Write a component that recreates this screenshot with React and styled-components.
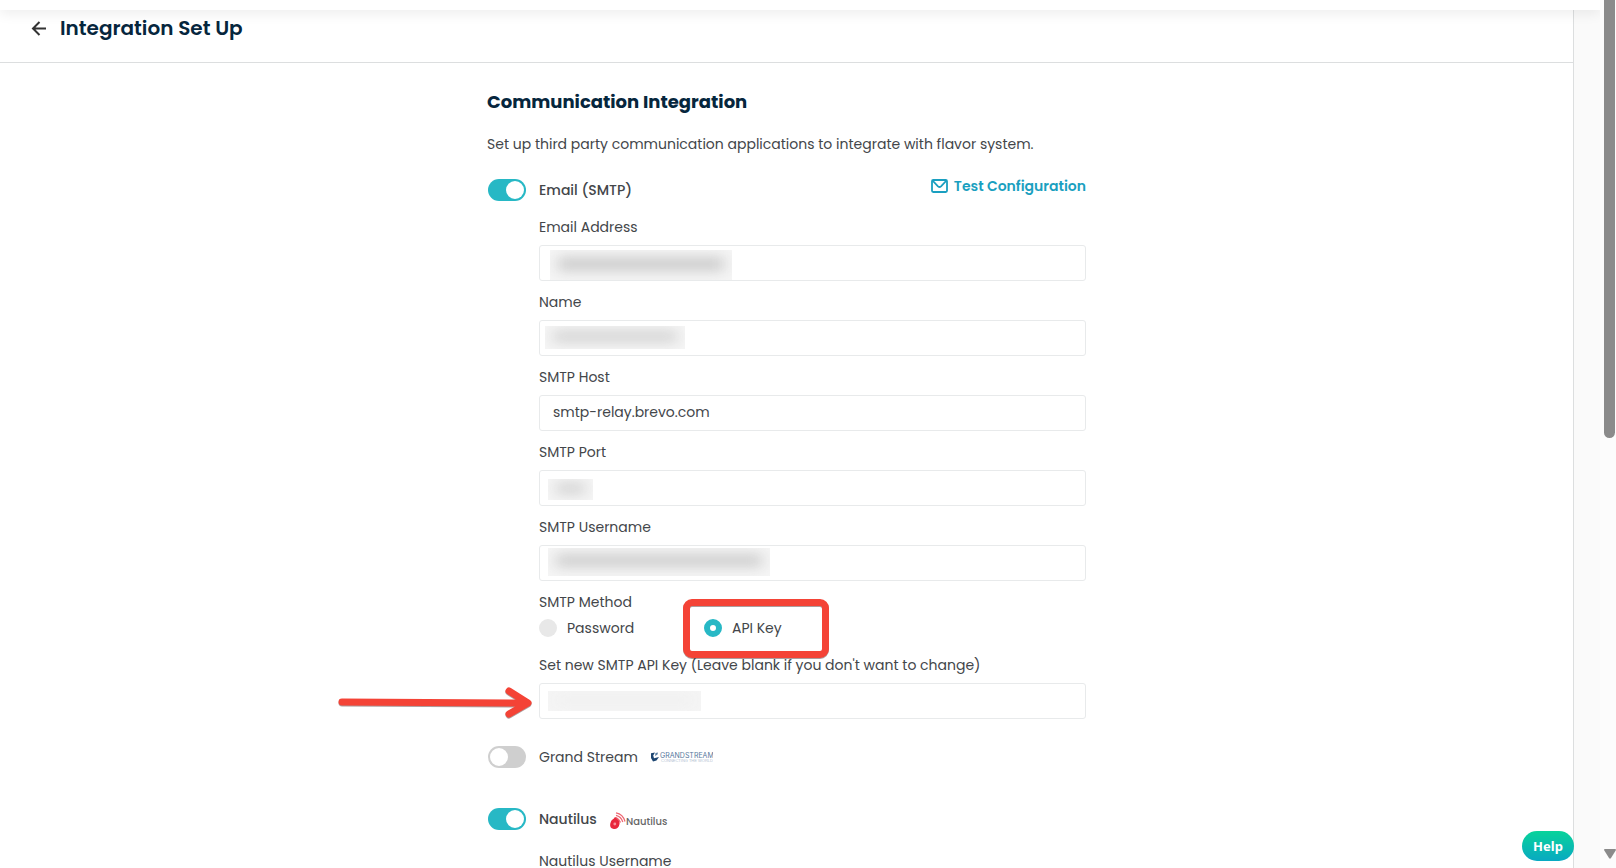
import { useState } from "react";
import styled, { createGlobalStyle, css } from "styled-components";

const GlobalStyle = createGlobalStyle`
  * {
    box-sizing: border-box;
  }

  body {
    margin: 0;
    background: #fff;
    color: #43464a;
    font-family: Poppins, Inter, "Liberation Sans", sans-serif;
    font-size: 14px;
    line-height: 22px;
  }

  h1,
  h2,
  p {
    margin: 0;
  }

  input,
  button {
    font: inherit;
    color: inherit;
  }
`;

const Shell = styled.div`
  display: grid;
  grid-template-columns: 1fr 26px 16px;
  grid-template-rows: 10px 1fr;
  height: 100vh;
  overflow: hidden;
`;

const TopBar = styled.div`
  grid-column: 1 / 3;
  background: #fff;
  box-shadow: 0 2px 14px rgba(0, 0, 0, 0.1);
  clip-path: inset(0 0 -20px 0);
  z-index: 1;
`;

const Page = styled.main`
  grid-row: 2;
  min-height: 0;
  overflow: hidden;
  border-right: 1px solid #dcdedf;
`;

const Gutter = styled.div`
  grid-row: 2;
  background: #fafafa;
`;

const ScrollTrack = styled.div`
  grid-column: 3;
  grid-row: 1 / 3;
  display: flex;
  flex-direction: column;
  justify-content: space-between;
  align-items: center;
  padding: 0 1px 9px 4px;
  background: #fcfcfc;
`;

const ScrollThumb = styled.div`
  width: 11px;
  height: 50.5vh;
  border-radius: 0 0 6px 6px;
  background: #8b8b8b;
`;

const Header = styled.header`
  display: flex;
  align-items: center;
  gap: 12px;
  padding: 4px 30px 20px;
  border-bottom: 1px solid #dcdedf;
`;

const BackButton = styled.button`
  display: flex;
  padding: 0;
  border: 0;
  background: none;
`;

const PageTitle = styled.h1`
  color: #06263d;
  font-size: 20px;
  font-weight: 600;
  line-height: 28px;
`;

const Content = styled.div`
  max-width: 599px;
  margin: 0 auto;
  padding-top: 25px;
`;

const SectionTitle = styled.h2`
  color: #06263d;
  font-size: 18px;
  font-weight: 700;
  line-height: 28px;
`;

const Intro = styled.p`
  margin-top: 17px;
`;

const Integration = styled.section`
  margin-top: ${({ $gap }) => $gap}px;
`;

const IntegrationHead = styled.div`
  display: flex;
  align-items: flex-end;
  gap: 13px;
`;

const Toggle = styled.input.attrs({ type: "checkbox", role: "switch" })`
  appearance: none;
  flex: none;
  display: flex;
  width: 38px;
  height: 22px;
  margin: 0 0 0 1px;
  padding: 2px;
  border-radius: 11px;
  background: #cfcfcf;

  &::before {
    content: "";
    width: 18px;
    height: 18px;
    border-radius: 50%;
    background: #fff;
  }

  &:checked {
    justify-content: flex-end;
    background: #27b8c5;
  }
`;

const IntegrationName = styled.label`
  font-weight: ${({ $active }) => ($active ? 500 : 400)};
`;

const TestLink = styled.a`
  display: flex;
  align-items: center;
  gap: 6px;
  margin-left: auto;
  padding-bottom: 4px;
  color: #1a9fc0;
  font-weight: 600;
  text-decoration: none;
`;

const Fields = styled.div`
  display: flex;
  flex-direction: column;
  gap: 10px;
  margin: ${({ $top }) => $top}px 0 0 52px;
`;

const Field = styled.div`
  position: relative;
`;

const FieldLabel = styled.label`
  display: block;
  margin-bottom: 7px;
`;

const TextInput = styled.input`
  display: block;
  width: 100%;
  height: 36px;
  padding: 0 13px 2px;
  border: 1px solid #e8eaeb;
  border-radius: 3px;
  background: #fff;
  outline: 0;
`;

const Redaction = styled.span`
  position: absolute;
  left: ${({ $x }) => $x}px;
  bottom: ${({ $y }) => $y}px;
  width: ${({ $w }) => $w}px;
  height: ${({ $h }) => $h}px;
  overflow: hidden;
  background: #f5f5f5;

  &::before {
    content: "";
    position: absolute;
    inset: 30% 8px 38%;
    background: ${({ $light }) => ($light ? "#ededed" : "#bdbdbd")};
    filter: blur(7px);
  }
`;

const MethodGroup = styled.div`
  position: relative;
  padding-bottom: 5px;
`;

const MethodRow = styled.div`
  display: flex;
  margin-top: 4px;
`;

const Option = styled.label`
  display: flex;
  align-items: center;
  gap: 10px;
  width: 165px;
`;

const Radio = styled.input.attrs({ type: "radio" })`
  appearance: none;
  width: 18px;
  height: 18px;
  margin: 0;
  border-radius: 50%;
  background: #e8e8e8;

  &:checked {
    border: 6px solid #27b8c5;
    background: #fff;
  }
`;

const redMark = css`
  position: absolute;
  pointer-events: none;
  filter: drop-shadow(0 1px 0 rgba(90, 60, 60, 0.5));
`;

const Highlight = styled.div`
  ${redMark}
  left: 144px;
  top: 8px;
  width: 146px;
  height: 59px;
  border: 7px solid #f44336;
  border-radius: 9px;
  z-index: 1;
`;

const Pointer = styled.svg`
  ${redMark}
  right: calc(100% + 7px);
  bottom: 0;
`;

const Logo = styled.svg`
  flex: none;
  align-self: center;
`;

const HelpButton = styled.button`
  position: fixed;
  right: 42px;
  bottom: 7px;
  width: 52px;
  height: 30px;
  padding: 0;
  border: 0;
  border-radius: 15px;
  background: linear-gradient(#08d39a, #09a9c2);
  color: #fff;
  font-family: "Noto Sans", sans-serif;
  font-size: 13px;
  font-weight: 700;
`;

function ArrowLeft() {
  return (
    <svg width="18" height="18" viewBox="0 0 18 18" fill="none" stroke="#333" strokeWidth="2">
      <path d="M16 9.500H3.500M9.500 3L3 9.500l6.500 6.500" />
    </svg>
  );
}

function Envelope() {
  return (
    <svg width="17" height="14" viewBox="0 0 17 14" fill="none" stroke="currentColor" strokeWidth="1.8" strokeLinejoin="round">
      <rect x="1" y="1" width="15" height="12" rx="1.2" />
      <path d="M1.500 1.500L7 7.400q1.500 1.300 3 0L15.500 1.500" />
    </svg>
  );
}

function GrandstreamLogo() {
  return (
    <Logo width="62" height="12" viewBox="1 0 62 12" role="img" aria-label="Grandstream">
      <path d="M0 2.500L5 1.500L3.200 4.500L4 7.200L9 6L6.500 9.500L3 10.500L1 7z" fill="#1d4672" />
      <path d="M5.500 2L8 1.500L7.500 3.500L5 5z" fill="#5b7fa3" />
      <text x="10" y="7" fill="#56789c" fontSize="7" fontFamily="Inter">GRANDSTREAM</text>
      <text x="11" y="11" fill="#b4c3d2" fontSize="4" fontFamily="Liberation Sans">CONNECTING THE WORLD</text>
    </Logo>
  );
}

function NautilusLogo() {
  return (
    <Logo width="60" height="22" viewBox="0 -4 60 22" role="img" aria-label="Nautilus">
      <path d="M4.500 5.500C7 4.500 10 8 9.500 12S6 17.500 3 16.800S-.5 13 .8 10S3.500 7.500 4.500 5.500z" fill="#e8283c" />
      <circle cx="4.800" cy="12" r="1.400" fill="#f7909a" />
      <g fill="none" stroke="#ee6672" strokeWidth="1.300">
        <path d="M6 .8Q13 2 15 9.500" />
        <path d="M6 3.400Q11 4.500 12.800 10" />
        <path d="M6.500 5.800Q9 7 10.500 10.500" />
      </g>
      <text x="16" y="13" fill="#666" fontSize="10" fontFamily="Poppins, Inter" fontWeight="500">Nautilus</text>
    </Logo>
  );
}

const smtpFields = [
  { id: "email", label: "Email Address", hidden: { $x: 11, $y: 1, $w: 182, $h: 30 } },
  { id: "name", label: "Name", hidden: { $x: 6, $y: 7, $w: 140, $h: 23 } },
  { id: "host", label: "SMTP Host", value: "smtp-relay.brevo.com" },
  { id: "port", label: "SMTP Port", hidden: { $x: 9, $y: 6, $w: 45, $h: 21 } },
  { id: "username", label: "SMTP Username", hidden: { $x: 9, $y: 5, $w: 222, $h: 28 } },
];

function TextField({ id, label, value = "", hidden, children }) {
  return (
    <Field>
      <FieldLabel htmlFor={id}>{label}</FieldLabel>
      <TextInput id={id} defaultValue={value} />
      {hidden && <Redaction {...hidden} />}
      {children}
    </Field>
  );
}

function App() {
  const [method, setMethod] = useState("apiKey");

  return (
    <>
      <GlobalStyle />
      <Shell>
        <TopBar />
        <Page>
          <Header>
            <BackButton aria-label="Back">
              <ArrowLeft />
            </BackButton>
            <PageTitle>Integration Set Up</PageTitle>
          </Header>
          <Content>
            <SectionTitle>Communication Integration</SectionTitle>
            <Intro>
              Set up third party communication applications to integrate with flavor system.
            </Intro>

            <Integration $gap={20}>
              <IntegrationHead>
                <Toggle id="smtp" defaultChecked />
                <IntegrationName htmlFor="smtp" $active>Email (SMTP)</IntegrationName>
                <TestLink href="#test">
                  <Envelope />
                  Test Configuration
                </TestLink>
              </IntegrationHead>
              <Fields $top={15}>
                {smtpFields.map((field) => (
                  <TextField key={field.id} {...field} />
                ))}
                <MethodGroup role="radiogroup" aria-labelledby="method">
                  <div id="method">SMTP Method</div>
                  <MethodRow>
                    <Option>
                      <Radio
                        name="method"
                        checked={method === "password"}
                        onChange={() => setMethod("password")}
                      />
                      Password
                    </Option>
                    <Option>
                      <Radio
                        name="method"
                        checked={method === "apiKey"}
                        onChange={() => setMethod("apiKey")}
                      />
                      API Key
                    </Option>
                  </MethodRow>
                  <Highlight />
                </MethodGroup>
                <TextField
                  id="apiKey"
                  label="Set new SMTP API Key (Leave blank if you don't want to change)"
                  hidden={{ $x: 9, $y: 8, $w: 153, $h: 20, $light: true }}
                >
                  <Pointer width="194" height="34" viewBox="0 0 194 34" fill="none" stroke="#f44336" strokeWidth="7" strokeLinecap="round" strokeLinejoin="round">
                    <path d="M4 17L188 18M171 6L190 18L171 29" />
                  </Pointer>
                </TextField>
              </Fields>
            </Integration>

            <Integration $gap={27}>
              <IntegrationHead>
                <Toggle id="grandstream" />
                <IntegrationName htmlFor="grandstream">Grand Stream</IntegrationName>
                <GrandstreamLogo />
              </IntegrationHead>
            </Integration>

            <Integration $gap={40}>
              <IntegrationHead>
                <Toggle id="nautilus" defaultChecked />
                <IntegrationName htmlFor="nautilus" $active>Nautilus</IntegrationName>
                <NautilusLogo />
              </IntegrationHead>
              <Fields $top={20}>
                <TextField id="nautilusUser" label="Nautilus Username" />
              </Fields>
            </Integration>
          </Content>
        </Page>
        <Gutter />
        <ScrollTrack>
          <ScrollThumb />
          <svg width="12" height="10" viewBox="0 0 12 10" fill="#8b8b8b">
            <path d="M1 0h10q1.500 0 .7 1.400L7 9q-1 1.300-2 0L.3 1.400Q-.5 0 1 0z" />
          </svg>
        </ScrollTrack>
        <HelpButton>Help</HelpButton>
      </Shell>
    </>
  );
}

export default App;
